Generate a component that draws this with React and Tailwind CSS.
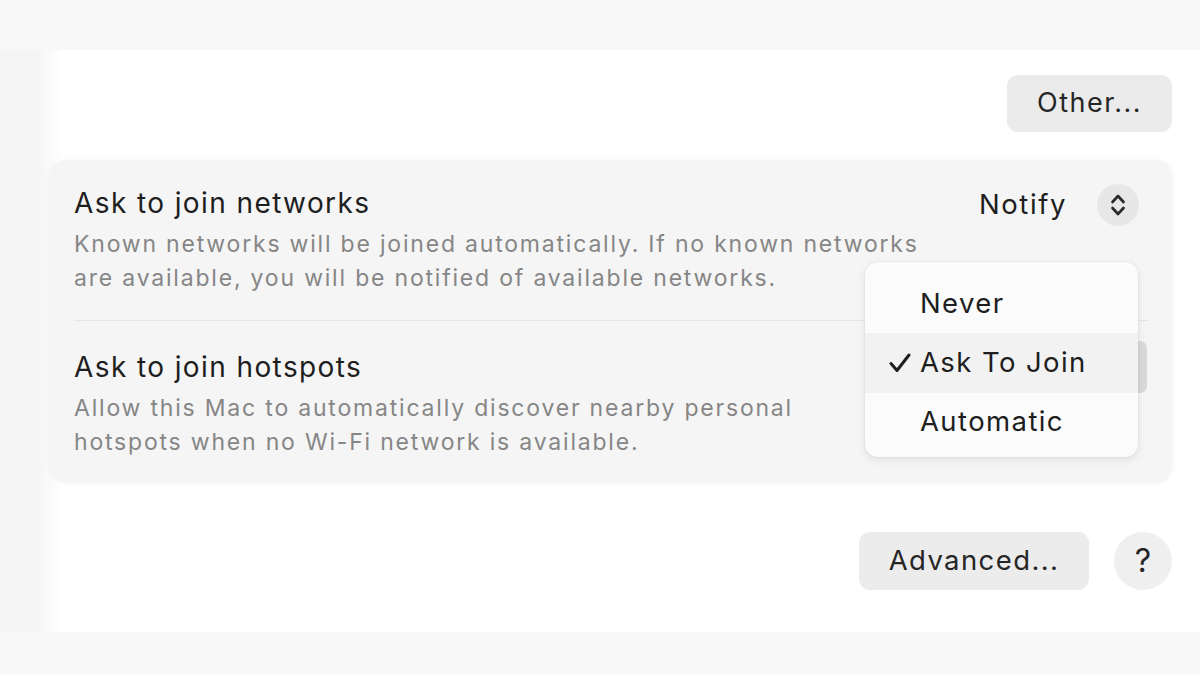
import React from "react";

function Chevrons() {
  return (
    <svg width="18" height="26" viewBox="0 0 18 26" fill="none" stroke="#2a2a2a" strokeWidth="2.7" strokeLinecap="round" strokeLinejoin="round">
      <path d="M3.5 10 L9 4 L14.5 10" />
      <path d="M3.5 16 L9 22 L14.5 16" />
    </svg>
  );
}

function Check() {
  return (
    <svg width="24" height="22" viewBox="0 0 24 22" fill="none" stroke="#1f1f1f" strokeWidth="3" strokeLinecap="round" strokeLinejoin="round">
      <path d="M3 11.5 L9 18.5 L21 3" />
    </svg>
  );
}

export default function App() {
  const font = { fontFamily: "Inter, 'Noto Sans', sans-serif" };
  return (
    <div className="w-[1200px] h-[675px] bg-[#f7f7f7] flex flex-col overflow-hidden relative" style={font}>
      <div className="h-[50px] shrink-0 bg-[#f8f8f8]" />
      <div className="flex h-[582px] shrink-0">
        <div className="w-[40px] shrink-0 bg-[#f5f5f5]" />
        <div className="w-[22px] shrink-0 bg-gradient-to-r from-[#f6f6f6] to-white" />
        <div className="flex-1 bg-white flex flex-col pr-[28px]">
          <div className="flex justify-end mt-[25px]">
            <div className="w-[165px] h-[57px] rounded-[11px] bg-[#ebebeb] flex items-center justify-center text-[27px] tracking-[1.5px] text-[#262626]">
              Other...
            </div>
          </div>
          <div className="-ml-[12px] mt-[28px] h-[323px] rounded-[16px] bg-[#f5f5f5] shadow-[0_0_6px_rgba(0,0,0,0.04)] px-[24px] flex flex-col">
            <div className="flex items-start pt-[26px] pb-[25px] border-b border-[#e6e6e6]">
              <div className="flex-1">
                <div className="text-[28px] leading-[34px] tracking-[1.4px] text-[#1e1e1e]">Ask to join networks</div>
                <div className="mt-[7px] text-[23px] leading-[34px] tracking-[1.8px] text-[#868686] whitespace-nowrap">
                  Known networks will be joined automatically. If no known networks<br />
                  are available, you will be notified of available networks.
                </div>
              </div>
              <div className="flex items-center gap-[30px] mr-[9px] -mt-[2px]">
                <span className="text-[27.5px] tracking-[1.6px] text-[#1e1e1e]">Notify</span>
                <div className="w-[42px] h-[42px] rounded-full bg-[#e7e7e7] flex items-center justify-center">
                  <Chevrons />
                </div>
              </div>
            </div>
            <div className="flex items-start pt-[29px] pb-[25px]">
              <div className="flex-1">
                <div className="text-[28px] leading-[34px] tracking-[1.4px] text-[#1e1e1e]">Ask to join hotspots</div>
                <div className="mt-[7px] text-[23px] leading-[34px] tracking-[1.8px] text-[#868686] whitespace-nowrap">
                  Allow this Mac to automatically discover nearby personal<br />
                  hotspots when no Wi-Fi network is available.
                </div>
              </div>
              <div className="w-[19px] h-[52px] mt-[-9px] mr-[1px] rounded-[7px] bg-[#d9d9d9]" />
            </div>
          </div>
          <div className="mt-[49px] flex justify-end gap-[25px]">
            <div className="w-[230px] h-[58px] rounded-[11px] bg-[#ececec] flex items-center justify-center text-[27.5px] tracking-[1.4px] text-[#262626]">
              Advanced...
            </div>
            <div className="w-[58px] h-[58px] rounded-full bg-[#efefef] flex items-center justify-center text-[32px] text-[#262626]">
              ?
            </div>
          </div>
        </div>
      </div>
      <div className="flex-1 bg-[#f8f8f8]" />

      {/* dropdown menu */}
      <div className="absolute left-[865px] top-[262px] w-[273px] h-[195px] rounded-[13px] bg-[#fbfbfb] shadow-[0_3px_10px_rgba(0,0,0,0.09),0_0_0_1px_rgba(0,0,0,0.025)] pt-[12px] flex flex-col">
        <div className="h-[59px] flex items-center pl-[55px] text-[27.5px] tracking-[1.4px] text-[#1e1e1e]">Never</div>
        <div className="h-[60px] flex items-center bg-[#f2f2f2] text-[27.5px] tracking-[1.4px] text-[#1e1e1e]">
          <span className="w-[55px] flex justify-end pr-[8px]"><Check /></span>
          Ask To Join
        </div>
        <div className="h-[58px] flex items-center pl-[55px] text-[27.5px] tracking-[1.4px] text-[#1e1e1e]">Automatic</div>
      </div>
    </div>
  );
}
